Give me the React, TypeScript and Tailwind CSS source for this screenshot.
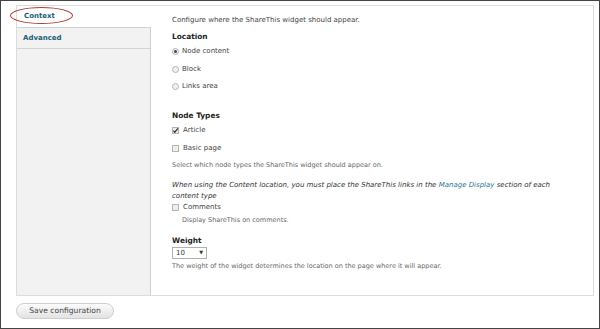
import React from "react";

const Radio = ({ checked }: { checked?: boolean }) => (
  <span className="inline-flex items-center justify-center w-[7px] h-[7px] rounded-full border border-[#b5b5b5] bg-[#f0f0f0] mr-[3px]">
    {checked && <span className="w-[3px] h-[3px] rounded-full bg-[#444]" />}
  </span>
);

const Check = ({ checked }: { checked?: boolean }) => (
  <span className="relative inline-flex items-center justify-center w-[7px] h-[7px] border border-[#b5b5b5] bg-[#eee] mr-[4px]">
    {checked && (
      <svg viewBox="0 0 8 8" className="absolute w-[7px] h-[7px]">
        <path d="M1.5 4.2 L3.2 6 L6.8 1.5" stroke="#333" strokeWidth="1.4" fill="none" />
      </svg>
    )}
  </span>
);

export default function App() {
  return (
    <div
      className="relative w-[600px] h-[329px] border border-[#444] bg-white overflow-hidden text-[#444]"
      style={{ fontFamily: '"DejaVu Sans", Verdana, sans-serif' }}
    >
      <div className="ml-[15px] mt-[4px] w-[578px] h-[291px] border border-[#dcdcdc] flex">
        <div className="w-[134px] bg-[#f2f2f2] border-r border-[#cfcfcf] shrink-0">
          <div className="h-[21px] bg-white -mr-px pl-[7px] text-[7px] font-bold text-[#1b5d78] leading-[21px]">
            Context
          </div>
          <div className="h-[22px] border-y border-[#d3d3d3] pl-[6px] text-[7px] font-bold text-[#1b5d78] leading-[20px]">
            Advanced
          </div>
        </div>
        <div className="flex-1 pl-[21px] flex flex-col text-[7px]">
          <div className="mt-[8px] h-[13px] leading-[13px] text-[#444]">Configure where the ShareThis widget should appear.</div>
          <div className="mt-[3px] h-[14px] leading-[14px] text-[7.4px] font-bold text-[#222]">Location</div>
          <div className="mt-[1px] h-[13px] flex items-center"><Radio checked />Node content</div>
          <div className="mt-[5px] h-[13px] flex items-center"><Radio />Block</div>
          <div className="mt-[4px] h-[13px] flex items-center"><Radio />Links area</div>
          <div className="mt-[16px] h-[14px] leading-[14px] text-[7.4px] font-bold text-[#222]">Node Types</div>
          <div className="mt-[1px] h-[13px] flex items-center"><Check checked />Article</div>
          <div className="mt-[5px] h-[13px] flex items-center"><Check />Basic page</div>
          <div className="mt-[4px] h-[13px] leading-[13px] text-[6.5px] text-[#666]">Select which node types the ShareThis widget should appear on.</div>
          <div className="mt-[8px] h-[11px] leading-[11px] italic text-[#333]">
            When using the Content location, you must place the ShareThis links in the{" "}
            <span className="text-[#2a7494]">Manage Display</span> section of each
          </div>
          <div className="h-[10px] leading-[10px] italic text-[#333]">content type</div>
          <div className="h-[12px] flex items-center"><Check />Comments</div>
          <div className="mt-[1px] h-[12px] leading-[12px] pl-[10px] text-[6.5px] text-[#666]">Display ShareThis on comments.</div>
          <div className="mt-[9px] h-[12px] leading-[12px] text-[7.4px] font-bold text-[#222]">Weight</div>
          <div className="h-[12px] w-[35px] border border-[#b0b0b0] flex items-center justify-between px-[3px] text-[7px] text-[#333]">
            <span>10</span>
            <span className="text-[5px]">▼</span>
          </div>
          <div className="mt-[1px] h-[12px] leading-[12px] text-[6.5px] text-[#666]">
            The weight of the widget determines the location on the page where it will appear.
          </div>
        </div>
      </div>
      <div className="ml-[15px] mt-[7px] w-[98px] h-[16px] rounded-full border border-[#cfcfcf] bg-gradient-to-b from-[#fbfbfb] to-[#e3e3e3] text-[7.6px] text-[#444] flex items-center justify-center">
        Save configuration
      </div>
      <div className="absolute left-[9px] top-[6px] w-[63px] h-[17px] rounded-[50%] border border-[#b03a3a]" />
    </div>
  );
}
